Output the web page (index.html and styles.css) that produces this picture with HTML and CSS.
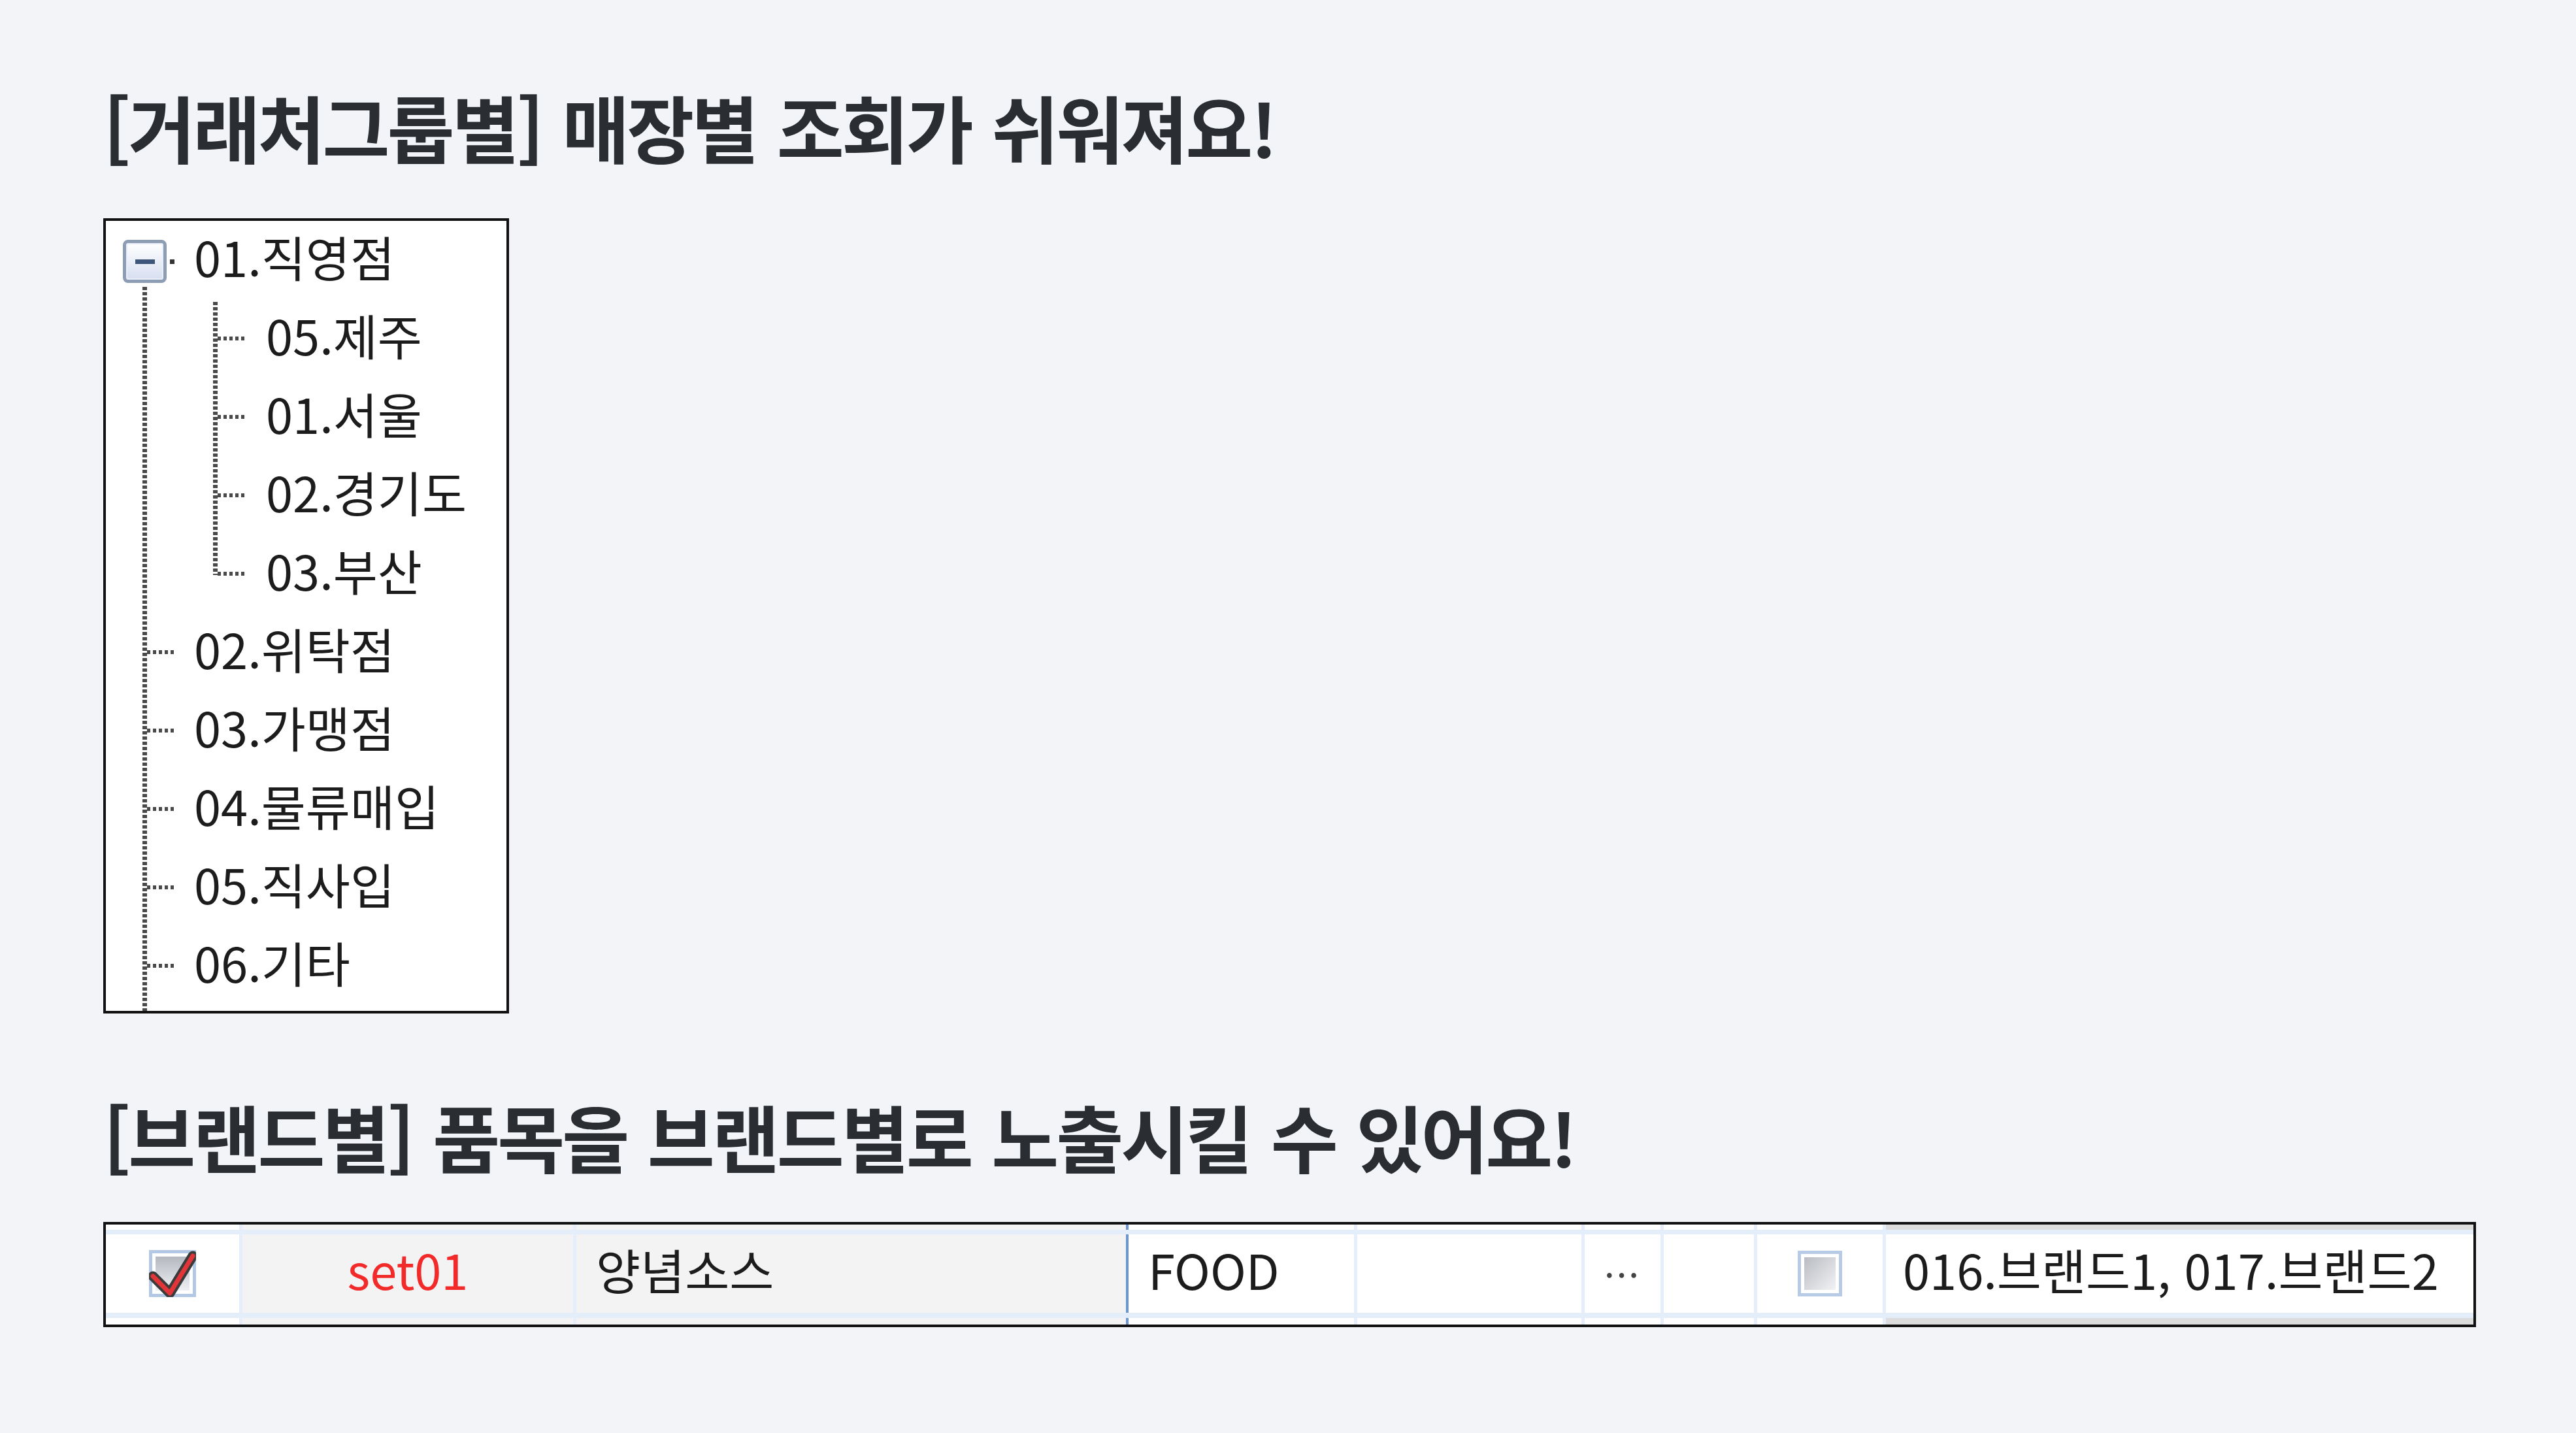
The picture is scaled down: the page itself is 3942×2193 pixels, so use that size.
FILE: index.html
```html
<!DOCTYPE html>
<html lang="ko">

<head>
    <meta charset="UTF-8">
    <meta name="viewport" content="width=device-width, initial-scale=1.0">
    <title>거래처그룹별 / 브랜드별</title>
    <link rel="stylesheet" href="styles.css">
</head>

<body>
    <main class="page">
        <h2 class="title">[거래처그룹별] 매장별 조회가 쉬워져요!</h2>

        <div class="tree">
            <div class="row root">
                <span class="toggle"><span class="minus"></span></span>
                <span class="stub"></span>
                <span class="label">01.직영점</span>
            </div>
            <div class="children">
                <div class="row child"><span class="label">05.제주</span></div>
                <div class="row child"><span class="label">01.서울</span></div>
                <div class="row child"><span class="label">02.경기도</span></div>
                <div class="row child"><span class="label">03.부산</span></div>
            </div>
            <div class="row leaf"><span class="label">02.위탁점</span></div>
            <div class="row leaf"><span class="label">03.가맹점</span></div>
            <div class="row leaf"><span class="label">04.물류매입</span></div>
            <div class="row leaf"><span class="label">05.직사입</span></div>
            <div class="row leaf"><span class="label">06.기타</span></div>
        </div>

        <h2 class="title title-brand">[브랜드별] 품목을 브랜드별로 노출시킬 수 있어요!</h2>

        <div class="grid">
            <div class="grid-row edge">
                <div class="cell"></div>
                <div class="cell gray"></div>
                <div class="cell gray"></div>
                <div class="cell key"></div>
                <div class="cell"></div>
                <div class="cell"></div>
                <div class="cell"></div>
                <div class="cell"></div>
                <div class="cell dim"></div>
            </div>
            <div class="grid-row main">
                <div class="cell center">
                    <svg class="check" viewBox="0 0 72 72" width="72" height="72">
                        <defs>
                            <linearGradient id="boxfill" x1="0" y1="0" x2="0" y2="1">
                                <stop offset="0" stop-color="#b4b8bf" />
                                <stop offset="1" stop-color="#eef0f3" />
                            </linearGradient>
                        </defs>
                        <rect x="0" y="0" width="72" height="72" fill="#b3c8e5" />
                        <rect x="5" y="5" width="62" height="62" fill="#ffffff" />
                        <rect x="10" y="10" width="52" height="52" fill="url(#boxfill)" />
                        <path d="M6 40 L32 66 L67 9" fill="none" stroke="#3b3b3b" stroke-width="15" stroke-linejoin="round" stroke-linecap="round" />
                        <path d="M6 40 L32 66 L67 9" fill="none" stroke="#e2353a" stroke-width="7" stroke-linejoin="round" stroke-linecap="round" />
                    </svg>
                </div>
                <div class="cell gray center"><span class="label code">set01</span></div>
                <div class="cell gray text"><span class="label">양념소스</span></div>
                <div class="cell key text"><span class="label">FOOD</span></div>
                <div class="cell"></div>
                <div class="cell center more">···</div>
                <div class="cell"></div>
                <div class="cell center">
                    <svg class="check" viewBox="0 0 68 70" width="68" height="70">
                        <defs>
                            <linearGradient id="boxempty" x1="0" y1="0" x2="1" y2="1">
                                <stop offset="0" stop-color="#b9bcc2" />
                                <stop offset="1" stop-color="#f1f2f4" />
                            </linearGradient>
                        </defs>
                        <rect x="0" y="0" width="68" height="70" fill="#b7cbe6" />
                        <rect x="5" y="5" width="58" height="60" fill="#ffffff" />
                        <rect x="10" y="10" width="48" height="50" fill="url(#boxempty)" />
                    </svg>
                </div>
                <div class="cell text brands"><span class="label">016.브랜드1, 017.브랜드2</span></div>
            </div>
            <div class="grid-row edge bottom">
                <div class="cell"></div>
                <div class="cell gray"></div>
                <div class="cell gray"></div>
                <div class="cell key"></div>
                <div class="cell"></div>
                <div class="cell"></div>
                <div class="cell"></div>
                <div class="cell"></div>
                <div class="cell dim"></div>
            </div>
        </div>
    </main>
</body>

</html>
```

FILE: styles.css
```css
body {
    margin: 0;
    padding: 0;
    background-color: #f3f4f8;
    color: #2a2e33;
    font-family: "Noto Sans CJK KR", "Noto Sans", sans-serif;
}

.page {
    padding: 126px 0 0 158px;
}

.title {
    margin: 0;
    font-size: 112px;
    font-weight: 700;
    line-height: 1.2;
    letter-spacing: -4px;
    word-spacing: 4px;
    color: #2a2e33;
    white-space: nowrap;
}

.title-brand {
    margin-top: 120px;
}

/* tree */

.tree {
    box-sizing: border-box;
    width: 621px;
    height: 1217px;
    margin-top: 74px;
    padding-bottom: 9px;
    border: 4px solid #111;
    background-color: #fff;
    background-image: repeating-linear-gradient(to bottom, #4a4a4a 0 5px, transparent 5px 8px);
    background-position: 56px 101px;
    background-size: 7px 100%;
    background-repeat: no-repeat;
    overflow: hidden;
    color: #1c1c1c;
    font-size: 74px;
}

.row {
    display: flex;
    align-items: center;
    height: 120px;
    line-height: 1;
    white-space: nowrap;
}

.label {
    margin-bottom: 13px;
}

.row.root {
    padding-left: 26px;
}

.row.root .label {
    margin-left: 30px;
}

.row.leaf {
    padding-left: 135px;
    background: repeating-linear-gradient(to right, #4a4a4a 0 5px, transparent 5px 9px) 63px 50% / 43px 6px no-repeat;
}

.children {
    background: repeating-linear-gradient(to bottom, #4a4a4a 0 5px, transparent 5px 8px) 164px 4px / 7px 418px no-repeat;
}

.row.child {
    padding-left: 245px;
    background: repeating-linear-gradient(to right, #4a4a4a 0 5px, transparent 5px 9px) 171px 50% / 43px 6px no-repeat;
}

.toggle {
    box-sizing: border-box;
    display: flex;
    align-items: center;
    justify-content: center;
    width: 67px;
    height: 66px;
    margin-top: 4px;
    border: 5px solid #8d9db4;
    border-radius: 8px;
    background: linear-gradient(to bottom, #ffffff, #d6def0);
    box-shadow: inset 0 0 0 2px #e9eef8;
}

.minus {
    width: 30px;
    height: 7px;
    background-color: #3c5579;
}

.stub {
    width: 7px;
    height: 7px;
    margin-left: 5px;
    margin-top: 4px;
    background-color: #333;
}

/* grid */

.grid {
    box-sizing: border-box;
    width: 3631px;
    margin-top: 64px;
    border: 4px solid #111;
    background-color: #fff;
}

.grid-row {
    display: grid;
    grid-template-columns: 204px 511px 846px 349px 348px 121px 143px 197px 1fr;
}

.grid-row.edge {
    height: 8px;
    border-bottom: 7px solid #e4edfa;
}

.grid-row.edge.bottom {
    height: 10px;
    border-top: 8px solid #e4edfa;
    border-bottom: 0;
}

.grid-row.main {
    height: 120px;
}

.cell {
    box-sizing: border-box;
    display: flex;
    align-items: center;
    border-left: 5px solid #e6eefb;
    font-size: 74px;
    line-height: 1;
    color: #1c1c1c;
    white-space: nowrap;
}

.cell:first-child {
    border-left: 0;
}

.cell.gray {
    background-color: #f3f3f3;
}

.cell.dim {
    background-color: #dcdcdc;
}

.cell.key {
    border-left: 4px solid #6a97d2;
}

.cell.center {
    justify-content: center;
}

.cell.text {
    padding-left: 30px;
}

.code {
    color: #f22a2a;
}

.cell.more {
    font-size: 56px;
    letter-spacing: 3px;
    color: #444;
}

.cell.brands {
    padding-left: 26px;
}

.check {
    display: block;
}
```
